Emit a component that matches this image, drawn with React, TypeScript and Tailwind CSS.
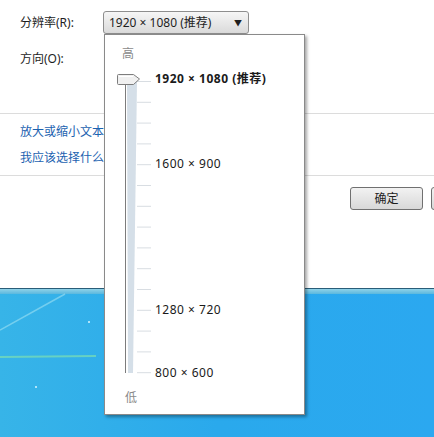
import React from 'react';

const font = { fontFamily: '"Noto Sans", "Noto Sans CJK SC", sans-serif' };

const TICKS = Array.from({ length: 15 }, (_, i) => 46 + i * 20.8);

const stops = [
  { label: '1920 × 1080 (推荐)', y: 44, bold: true },
  { label: '1600 × 900', y: 129, bold: false },
  { label: '1280 × 720', y: 275, bold: false },
  { label: '800 × 600', y: 338, bold: false },
];

function ResolutionPopup() {
  return (
    <div className="absolute left-[104px] top-[34px] w-[201px] h-[381px] bg-white border border-[#8a8a8a] shadow-[2px_2px_3px_rgba(0,0,0,0.35)]">
      <div className="relative w-full h-full">
        <div className="absolute left-[17px] top-[10px] text-[12px] text-[#8a8a8a]">高</div>

        <svg className="absolute left-0 top-0" width="60" height="381" viewBox="0 0 60 381">
          {/* 轨道 */}
          <polygon points="22,46 32,46 28,338 23,338" fill="#d5dfe8" />
          <line x1="20.5" y1="46" x2="20.5" y2="338" stroke="#7c7c7c" strokeWidth="1" />
          {TICKS.map((y, i) => (
            <line key={i} x1="32" y1={y + 0.5} x2="46" y2={y + 0.5} stroke="#d8dde2" strokeWidth="1" />
          ))}
          {/* つまみ */}
          <path
            d="M13.5 39.5 H28.5 L34.5 44 L28.5 49.5 H13.5 Q12.5 49.5 12.5 48.5 V40.5 Q12.5 39.5 13.5 39.5 Z"
            fill="#f0f0f0"
            stroke="#7d7d7d"
            strokeWidth="1"
          />
          <line x1="14" y1="41.5" x2="28" y2="41.5" stroke="#ffffff" strokeWidth="1" />
        </svg>

        {stops.map((s) => (
          <div
            key={s.label}
            className={`absolute left-[50px] text-[12px] leading-[16px] tracking-[0.5px] text-[#1a1a1a] whitespace-nowrap ${
              s.bold ? 'font-bold' : ''
            }`}
            style={{ top: s.y - 8 }}
          >
            {s.label}
          </div>
        ))}

        <div className="absolute left-[20px] top-[354px] text-[12px] text-[#8a8a8a]">低</div>
      </div>
    </div>
  );
}

export default function App() {
  return (
    <div className="relative w-[434px] h-[437px] overflow-hidden bg-white flex flex-col" style={font}>
      {/* ウィンドウ本体 */}
      <div className="h-[288px] flex flex-col text-[12px] text-[#1e1e1e]">
        <div className="flex items-center pt-[11px] pl-[20px] h-[34px]">
          <span className="w-[83px]">分辨率(R):</span>
          <div className="w-[146px] h-[23px] flex items-center justify-between px-[5px] rounded-[3px] border border-[#8e8e8e] bg-gradient-to-b from-[#f6f6f6] to-[#dadada]">
            <span>1920 × 1080 (推荐)</span>
            <span className="text-[8px] mr-[1px]">▼</span>
          </div>
        </div>
        <div className="pl-[20px] mt-[17px] leading-[16px]">方向(O):</div>

        <div className="mt-[46px] border-t border-[#dcdcdc]" />

        <div className="pl-[20px] mt-[10px] flex flex-col gap-[10px] text-[#1c62b0] leading-[16px]">
          <span>放大或缩小文本和其他项目</span>
          <span>我应该选择什么显示器设置？</span>
        </div>

        <div className="mt-[9px] border-t border-[#dcdcdc]" />

        <div className="flex justify-end gap-[8px] mt-[11px] -mr-[70px]">
          <button className="w-[73px] h-[23px] rounded-[3px] border border-[#707070] bg-gradient-to-b from-[#f2f2f2] to-[#d8d8d8] text-[12px]">
            确定
          </button>
          <button className="w-[73px] h-[23px] rounded-[3px] border border-[#707070] bg-gradient-to-b from-[#f2f2f2] to-[#d8d8d8] text-[12px]">
            取消
          </button>
        </div>
      </div>

      {/* デスクトップ */}
      <div className="relative flex-1 flex flex-col">
        <div className="h-[1px] bg-[#2a5d78]" />
        <div className="h-[5px] bg-gradient-to-b from-[#8fd2e8] to-[#5ab8de]" />
        <div className="flex-1 bg-gradient-to-r from-[#37b4e8] via-[#2aa9ec] to-[#2ba8f0]" />
        <svg className="absolute left-0 top-0" width="434" height="149" viewBox="0 0 434 149">
          <line x1="0" y1="42" x2="65" y2="6" stroke="#a8e6f4" strokeOpacity="0.55" strokeWidth="1.5" />
          <line x1="0" y1="69" x2="96" y2="68" stroke="#7ee0b0" strokeOpacity="0.7" strokeWidth="2" />
          <circle cx="89" cy="34" r="1" fill="#d8f4ff" />
          <circle cx="36" cy="99" r="1" fill="#d8f4ff" />
        </svg>
      </div>

      <ResolutionPopup />
    </div>
  );
}
